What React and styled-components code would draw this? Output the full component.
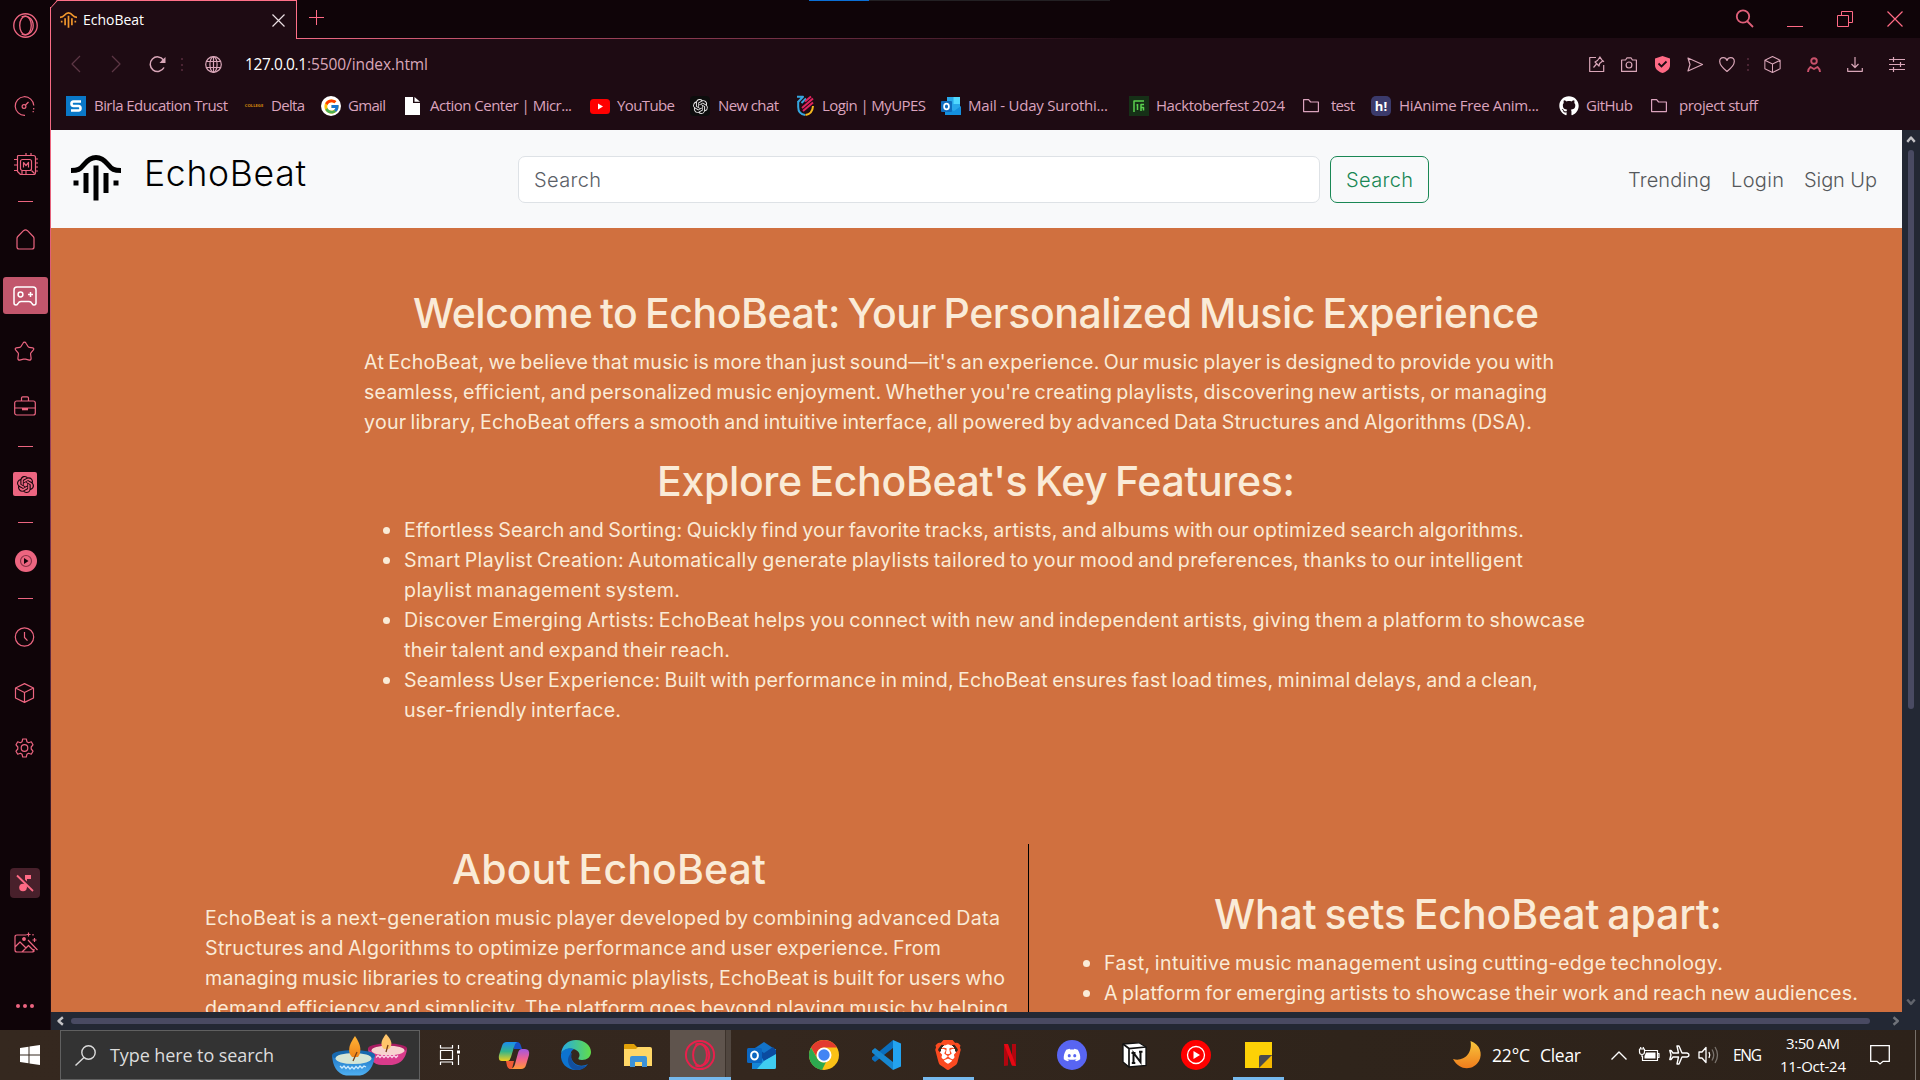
import React, { useLayoutEffect, useRef, useState } from "react";
import styled, { createGlobalStyle } from "styled-components";
import { FcGoogle } from "react-icons/fc";
import { SiOpenai, SiBrave } from "react-icons/si";
import { FaGithub, FaDiscord } from "react-icons/fa";

const PINK = "#ec6580";
const HOT = "#ff6a85";
const ICON = "#d9a6b8";
const UI_FONT = '"Open Sans", "Noto Sans", sans-serif';
const PAGE_FONT = 'Inter, "Liberation Sans", sans-serif';

const GlobalStyle = createGlobalStyle`
  * { box-sizing: border-box; }
  html, body { margin: 0; padding: 0; overflow: hidden; background: #0f0408; }
  svg { display: block; flex: none; overflow: visible; }
`;

/* ---------- text fitted to a measured width ---------- */
const FitBox = styled.span`
  display: block;
  flex: none;
  white-space: pre;
  width: ${(p) => p.$w}px;
`;
const FitInner = styled.span`
  display: inline-block;
  white-space: pre;
`;
function Fit({ w, children }) {
  const ref = useRef(null);
  const [ls, setLs] = useState(0);
  useLayoutEffect(() => {
    const natural = ref.current.getBoundingClientRect().width;
    const n = ref.current.textContent.length;
    setLs((w - natural) / Math.max(1, n - 1));
  }, [w]);
  return (
    <FitBox $w={w}>
      <FitInner ref={ref} style={{ letterSpacing: `${ls}px` }}>{children}</FitInner>
    </FitBox>
  );
}

/* ---------- shell ---------- */
const Desktop = styled.div`
  width: 1920px;
  height: 1080px;
  overflow: hidden;
  display: flex;
  flex-direction: column;
  font-family: ${UI_FONT};
`;
const Browser = styled.div`
  display: flex;
  height: 1030px;
  flex: none;
`;
const Sidebar = styled.nav`
  width: 50px;
  flex: none;
  background: #0f0408;
  display: flex;
  flex-direction: column;
  align-items: center;
  padding-top: 13px;
`;
const Slot = styled.div`
  margin-top: ${(p) => p.$gap}px;
  transform: translateX(${(p) => p.$dx || 0}px);
  width: ${(p) => p.$w || 24}px;
  height: ${(p) => p.$h}px;
  background: ${(p) => p.$bg || "transparent"};
  border-radius: ${(p) => p.$r || 0}px;
  display: flex;
  align-items: center;
  justify-content: center;
  flex: none;
  color: ${PINK};
`;
const Edge = styled.div`
  width: 1px;
  flex: none;
  margin-top: 7px;
  background: linear-gradient(#ff7088 0, #e0607a 240px, #7a3350 520px, #3a1a2a 800px, #1e0c14 1000px);
`;
const Main = styled.div`
  width: 1869px;
  display: flex;
  flex-direction: column;
`;

/* ---------- title bar ---------- */
const TitleBar = styled.div`
  height: 39px;
  background: #0f0408;
  display: flex;
  flex: none;
  position: relative;
`;
const Tab = styled.div`
  width: 246px;
  height: 39px;
  background: #1e0b13;
  border-top: 1px solid #ff7088;
  border-right: 1px solid #ff7088;
  display: flex;
  align-items: center;
  padding-left: 9px;
  color: #fff;
  font-size: 14px;
  position: relative;
  clip-path: polygon(6px 0, 100% 0, 100% 100%, 0 100%, 0 7px);
`;
const TabCorner = styled.svg`
  position: absolute;
  left: -1px;
  top: -1px;
`;
const TabTitle = styled.div`
  margin: -1px 0 0 6px;
  width: 189px;
`;
const BarRest = styled.div`
  flex: 1;
  display: flex;
  align-items: flex-start;
  border-bottom: 1px solid;
  border-image: linear-gradient(90deg, #f06a84 0, #b04a62 220px, #6a2c40 520px, #1e0b13 820px) 1;
  padding: 10px 0 0 12px;
`;
const WindowControls = styled.div`
  margin-left: auto;
  display: flex;
  align-items: center;
  gap: 34px;
  padding-right: 17px;
`;
const TopStrip = styled.div`
  position: absolute;
  left: 758px;
  top: 0;
  width: 301px;
  height: 1px;
  background: linear-gradient(90deg, #0a6fd6 60px, #232023 60px);
`;

/* ---------- address bar ---------- */
const AddressBar = styled.div`
  height: 50px;
  flex: none;
  background: #1e0b13;
  display: flex;
  align-items: center;
  padding-left: 20px;
  color: ${ICON};
`;
const Spacer = styled.div`
  width: ${(p) => p.$w}px;
  flex: none;
`;
const Url = styled.div`
  display: flex;
  font-size: 15.5px;
  color: ${ICON};
  b { font-weight: 400; color: #fff; }
`;
const Tools = styled.div`
  margin-left: auto;
  display: flex;
  align-items: center;
  padding-right: 13px;
`;
const Tool = styled.div`
  width: 20px;
  height: 20px;
  margin-left: ${(p) => p.$gap}px;
  color: ${(p) => p.$c || ICON};
  display: flex;
  align-items: center;
  justify-content: center;
`;
const Dots = styled.div`
  width: 2px;
  height: 13px;
  margin-left: ${(p) => p.$gap || 0}px;
  background: repeating-linear-gradient(#4a2433 0 2px, transparent 2px 5.5px);
`;

/* ---------- bookmarks ---------- */
const Bookmarks = styled.div`
  height: 41px;
  flex: none;
  background: #1e0b13;
  display: flex;
  padding: 7px 0 0 15px;
`;
const Bookmark = styled.div`
  width: ${(p) => p.$w}px;
  height: 20px;
  flex: none;
  display: flex;
  align-items: center;
  gap: ${(p) => p.$gap}px;
  font-size: 15px;
  color: #dba3bd;
`;
const BookmarkText = styled.div`
  margin-top: -2px;
`;
const Glyph = styled.div`
  width: 20px;
  height: 20px;
  flex: none;
  display: flex;
  align-items: center;
  justify-content: center;
  background: ${(p) => p.$bg || "transparent"};
  border-radius: ${(p) => p.$r || 0}px;
  color: ${(p) => p.$c || "#fff"};
  font-size: ${(p) => p.$fs || 12}px;
  font-weight: 700;
  line-height: 1;
`;

/* ---------- web page ---------- */
const Frame = styled.div`
  display: flex;
  height: 882px;
  flex: none;
`;
const Page = styled.div`
  width: 1851px;
  height: 882px;
  overflow: hidden;
  background: #d0703f;
  color: #faebd7;
  font-family: ${PAGE_FONT};
`;
const Navbar = styled.header`
  height: 98px;
  background: #f8f9fa;
  display: flex;
  align-items: center;
  padding-left: 20px;
`;
const LogoWrap = styled.div`
  margin-top: -3px;
`;
const Brand = styled.div`
  width: 374px;
  margin: -12px 0 0 23px;
  font-size: 35.5px;
  font-weight: 300;
  color: #000;
`;
const SearchField = styled.div`
  width: 802px;
  height: 47px;
  flex: none;
  border: 1px solid #dee2e6;
  border-radius: 7px;
  background: #fff;
  color: #5b6067;
  font-size: 20px;
  font-weight: 300;
  display: flex;
  align-items: center;
  padding: 2px 0 0 15px;
`;
const SearchButton = styled.button`
  width: 99px;
  height: 47px;
  margin-left: 10px;
  padding: 2px 0 0 15px;
  border: 1px solid #198754;
  border-radius: 7px;
  background: transparent;
  color: #198754;
  font: 300 20px ${PAGE_FONT};
  text-align: left;
`;
const NavLinks = styled.div`
  display: flex;
  gap: 20px;
  margin-left: auto;
  padding: 2px 25px 0 0;
  font-size: 20px;
  font-weight: 300;
  color: #55585b;
`;
const Hero = styled.section`
  height: 616px;
  padding: 61px 0 0 313px;
`;
const Heading = styled.h1`
  margin: 0 0 10px ${(p) => p.$x}px;
  height: 48px;
  line-height: 48px;
  font-size: 41px;
  font-weight: 500;
  word-spacing: -3px;
`;
const Lines = styled.div`
  font-size: 19.6px;
  line-height: 30px;
  margin-bottom: 20px;
  word-spacing: -1.6px;
`;
const List = styled.ul`
  margin: 0;
  padding: 0;
  list-style: none;
  font-size: 19.6px;
  line-height: 30px;
  word-spacing: -1.6px;
`;
const Item = styled.li`
  display: grid;
  grid-template-columns: 40px auto;
  &::before {
    content: "";
    width: 7px;
    height: 7px;
    border-radius: 50%;
    background: #faebd7;
    margin: 12px 0 0 19px;
  }
`;
const Columns = styled.section`
  display: flex;
`;
const About = styled.div`
  width: 978px;
  height: 400px;
  padding: 1px 0 0 154px;
  border-right: 1px solid #000;
`;
const Apart = styled.div`
  padding: 46px 0 0 35px;
`;

/* ---------- scrollbars ---------- */
const VScroll = styled.div`
  width: 18px;
  height: 882px;
  background: #232834;
  display: flex;
  flex-direction: column;
  align-items: center;
  padding: 5px 0;
`;
const VThumb = styled.div`
  width: 6px;
  height: 559px;
  margin: 5px 0 auto;
  border-radius: 3px;
  background: #494a62;
`;
const HScroll = styled.div`
  height: 18px;
  flex: none;
  background: #232834;
  display: flex;
  align-items: center;
  padding-left: 5px;
`;
const HThumb = styled.div`
  width: 1799px;
  height: 6px;
  margin: 0 21px 0 5px;
  border-radius: 3px;
  background: #494a62;
`;

/* ---------- taskbar ---------- */
const Taskbar = styled.footer`
  height: 50px;
  flex: none;
  display: flex;
  align-items: center;
  background: linear-gradient(90deg, #35281f, #34271e 40%, #2f241b 70%, #2d221a);
  color: #fff;
`;
const Start = styled.div`
  width: 60px;
  padding-left: 20px;
`;
const TaskSearch = styled.div`
  width: 360px;
  height: 50px;
  border: 1px solid #606060;
  background: #333;
  display: flex;
  align-items: center;
  padding-left: 14px;
  color: #dcdcdc;
  font-size: 18px;
`;
const TaskView = styled.div`
  width: 63px;
  padding-left: 20px;
`;
const TaskApp = styled.div`
  width: 62px;
  height: 50px;
  display: flex;
  align-items: center;
  justify-content: center;
  ${(p) =>
    p.$active &&
    `background: linear-gradient(90deg,transparent 1px,#5f544d 1px 56px,#3d332c 56px 57px,#50463f 57px);
     box-shadow: inset 0 -3px #76b9ed;`}
  ${(p) =>
    p.$open &&
    `background: linear-gradient(#76b9ed,#76b9ed) 6px 47px / 51px 3px no-repeat;`}
`;
const BraveBadge = styled.div`
  color: #fb4a20;
  width: 30px;
  height: 30px;
  display: flex;
  align-items: center;
  justify-content: center;
  background: radial-gradient(ellipse 8px 11px, #fff 98%, transparent);
`;
const Tray = styled.div`
  margin-left: auto;
  display: flex;
  align-items: center;
  width: 467px;
  height: 50px;
  font-size: 17.5px;
`;
const Lang = styled.div`
  font-size: 15.5px;
  margin: -1px 0 0 14px;
`;
const Clock = styled.div`
  margin: -1px 0 0 18px;
  width: 66px;
  font-size: 15px;
  line-height: 23px;
  display: flex;
  flex-direction: column;
  align-items: center;
`;
const ShowDesktop = styled.div`
  width: 1px;
  height: 50px;
  margin-left: 25px;
  background: #77706a;
`;

/* ---------- drawings ---------- */
const S = ({ w = 20, h = w, vb, sw = 1.2, children, ...r }) => (
  <svg width={w} height={h} viewBox={vb || `0 0 ${w} ${h}`} fill="none" stroke="currentColor" strokeWidth={sw} strokeLinejoin="round" {...r}>
    {children}
  </svg>
);
const Wave = ({ w, h, color }) => (
  <S w={w} h={h} vb="0 0 50 46" stroke={color} sw={5} preserveAspectRatio="none">
    <path d="M0 15.500c7 0 9-1 13-6C17 4.500 20 2.500 25 2.500s8 2 12 7c4 5 6 6 13 6" />
    <path d="M25 10.500v35M15 18v20M35 18v20M2.500 28h5M42.500 28h5" />
  </S>
);
const OperaRing = ({ w, h, color, sw }) => (
  <S w={w} h={h} vb="0 0 26 26" stroke={color} sw={sw}>
    <circle cx="13" cy="13" r="12.200" />
    <ellipse cx="13" cy="13" rx="6" ry="9.600" />
    <path d="M9 4C15 1.500 21 6 21 13s-6 11.500-12 9" />
  </S>
);
const Cube = ({ s }) => (
  <S w={s} vb="0 0 20 20"><path d="M10 .6 19 5v10l-9 4.400L1 15V5zM1 5l9 4.500L19 5M10 9.500v10" /></S>
);
const Folder = () => <S w={16} h={14} stroke="#dba3bd"><path d="M.6 12.600V.6h5l2 2.400h7.800v9.600z" /></S>;
const Chev = ({ d, c }) => <S w={10} h={10} vb="0 0 8 8" sw={1.9} stroke={c}><path d={d} /></S>;

const bookmarks = [
  { w: 178, gap: 8, t: "Birla Education Trust", tw: 134, i: <Glyph $bg="#0a78c8"><S w={12} h={12} sw={2.6} stroke="#fff"><path d="M11 1.500H3.500Q1.500 1.500 1.500 3.700T3.500 6h5q2 0 2 2.300t-2 2.200H1" /></S></Glyph> },
  { w: 77, gap: 7, t: "Delta", tw: 34, i: <Glyph $c="#d58a0c" $fs={4.2}>COLLEGE</Glyph> },
  { w: 81, gap: 7, t: "Gmail", tw: 38, i: <Glyph $bg="#fff" $r={10}><FcGoogle size={17} /></Glyph> },
  { w: 188, gap: 8, t: "Action Center | Micr...", tw: 142, i: <Glyph><svg width="15" height="18"><path d="M0 0h8v6h7v12H0z" fill="#fff" /><path d="M9.500 0v4.800H15z" fill="#fff" /></svg></Glyph> },
  { w: 100, gap: 7, t: "YouTube", tw: 58, i: <Glyph><svg width="20" height="15"><rect width="20" height="15" rx="3.500" fill="#f00" /><path d="M8 4.500v6l5-3z" fill="#fff" /></svg></Glyph> },
  { w: 105, gap: 8, t: "New chat", tw: 61, i: <Glyph $bg="#0d0d0d" $r={4} $c="#e8e8e8"><SiOpenai size={15} /></Glyph> },
  { w: 146, gap: 7, t: "Login | MyUPES", tw: 104, i: <Glyph><S w={17} h={20} sw={2}><path d="M1.200 5v6q0 7 7 8" stroke="#35a7e0" /><path d="M0 .800h6L1 6M4.500 7 9 2.500" stroke="#35a7e0" /><path d="M8 5.500 14 .5M5 12 16 2.500M6 15 16 6.500" stroke="#e0245e" /><path d="M8.500 19q7-1 7.500-9" stroke="#f5b81f" /></S></Glyph> },
  { w: 188, gap: 7, t: "Mail - Uday Surothi...", tw: 140, i: <Glyph><svg width="20" height="20"><path d="M6 1h13v17H6z" fill="#28a8ea" /><path d="M12.500 1H19v7h-6.500z" fill="#50d9ff" /><path d="M4 11l9 4 7-5v9H4z" fill="#1490df" /><rect y="5" width="11" height="11" rx="1" fill="#0f6cbd" /><ellipse cx="5.500" cy="10.500" rx="2.400" ry="2.900" fill="none" stroke="#fff" strokeWidth="1.700" /></svg></Glyph> },
  { w: 172, gap: 7, t: "Hacktoberfest 2024", tw: 129, i: <Glyph $bg="#163017"><S w={12} h={12} stroke="#5bd14f" sw={1.5}><path d="M1 12V1h10M4.500 4v6M3.500 5h1M8 11V4.500h3M8 7.500h2.500v3" /></S></Glyph> },
  { w: 70, gap: 10, t: "test", tw: 24, i: <Glyph><Folder /></Glyph> },
  { w: 188, gap: 8, t: "HiAnime Free Anim...", tw: 140, i: <Glyph $bg="#3b3a6b" $r={5} $fs={13}>h!</Glyph> },
  { w: 90, gap: 7, t: "GitHub", tw: 47, i: <Glyph><FaGithub size={20} /></Glyph> },
  { w: 120, gap: 10, t: "project stuff", tw: 79, i: <Glyph><Folder /></Glyph> },
];

const Side = () => (
  <Sidebar>
    <Slot $h={25} $gap={0} $w={26}><OperaRing w={25} h={25} color={PINK} sw={1.4} /></Slot>
    <Slot $h={20} $gap={58} $dx={-0.5}>
      <S w={20}><path d="M10.500 19.300A9.300 9.300 0 1 1 19.300 9.500" /><path d="M19.200 12v1.500M18.700 15v1.200" /><circle cx="9.500" cy="10.500" r="1.900" /><path d="M11 9 14 6" /></S>
    </Slot>
    <Slot $h={24} $gap={37} $dx={1}>
      <S w={24}><path d="M3.500 3.500q0-1 1-1h15q2 0 2 2v15q0 2-2 2h-13l-3-3z" /><rect x="6.500" y="6.500" width="11" height="11" rx="2" /><path d="M9.500 14.500v-5l2.500 3 2.500-3v5M12 0v2.500M17 0v2.500M0 6.500h3.500M0 12h3.500M0 17.500h3.500M21.500 6h2.500M21.500 10h2.500M21.500 14h2.500M21.500 18h2.500M8 17.500v4M12 17.500v4M17.500 17.500l3 3" /></S>
    </Slot>
    <Slot $h={1} $w={15} $gap={24} $bg={PINK} />
    <Slot $h={22} $gap={26}><S w={19} h={21}><path d="M1 9.500q0-1.200.8-2L7.500 1.700q2-1.500 4 0l5.700 5.800q.8.800.8 2V18q0 2-2 2H3q-2 0-2-2z" /></S></Slot>
    <Slot $h={37} $w={45} $gap={27} $bg="#c2566c" $r={3}>
      <S w={24} h={20} stroke="#fff" sw={1.5}><path d="M1 4q0-3 3-3h16q3 0 3 3v13q0 2-2 2-1 0-2-1.500-1-2-3-2H8q-2 0-3 2Q4 19 3 19q-2 0-2-2z" /><circle cx="7.500" cy="8.500" r="2.400" /><path d="M15 8.500h5M17.500 6v5" /></S>
    </Slot>
    <Slot $h={21} $gap={27} $dx={-1}><S w={21}><path d="M10.500 1.200q1 0 1.500 1l2 3.300q.4.700 1.200.8l3.500.6q1.800.5.700 2l-2.500 3q-.4.500-.3 1.300l.5 4q0 2-1.800 2l-3.800-1q-1-.2-2 0l-3.800 1q-1.800 0-1.800-2l.5-4q.1-.8-.3-1.300l-2.500-3q-1.100-1.500.7-2l3.500-.6q.8-.1 1.200-.8l2-3.300q.5-1 1.500-1z" /></S></Slot>
    <Slot $h={20} $gap={34}><S w={22} h={20}><rect x=".7" y="5" width="20.600" height="14" rx="2" /><path d="M7.500 5V2q0-1.200 1.200-1.200h4.600q1.200 0 1.200 1.200v3M.7 12h20.600" /><path d="M8 12h6v2.300H8z" fill="currentColor" stroke="none" /></S></Slot>
    <Slot $h={1} $w={15} $gap={30} $bg={PINK} />
    <Slot $h={24} $gap={25} $bg={PINK} $r={2}><SiOpenai size={17} color="#14050a" /></Slot>
    <Slot $h={1} $w={15} $gap={26} $bg={PINK} />
    <Slot $h={22} $gap={27} $w={22} $r={11} $bg={PINK} $dx={1}><S w={14} stroke="#8a3347"><circle cx="7" cy="7" r="5.500" /><path d="M5 4v6l4.500-3z" fill="#14050a" stroke="none" /></S></Slot>
    <Slot $h={1} $w={15} $gap={26} $bg={PINK} />
    <Slot $h={20} $gap={28} $dx={-0.5}><S w={20}><circle cx="10" cy="10" r="9.200" /><path d="M10 5v5.500l3 3.200" /></S></Slot>
    <Slot $h={20} $gap={36} $dx={-0.5}><Cube s={20} /></Slot>
    <Slot $h={20} $gap={35} $dx={-0.5}>
      <S w={20}><circle cx="10" cy="10" r="3.300" /><path d="M8.200 1h3.600l.6 2.700 1.700 1 2.700-.9 1.700 3L16.700 9v2l1.800 2.200-1.700 3-2.700-.9-1.700 1-.6 2.700H8.200l-.6-2.700-1.700-1-2.700.9-1.700-3L3.300 11V9L1.500 6.800l1.700-3 2.700.9 1.700-1z" /></S>
    </Slot>
    <Slot $h={30} $w={30} $gap={110} $bg="#48202b" $r={4}>
      <S w={18} stroke={HOT} sw={1.8}><path d="M1 1.500 17 17" /><circle cx="7" cy="13.500" r="3.800" fill={HOT} stroke="none" /><path d="M9 1h6v4h-4v2.500L9 5.500z" fill={HOT} stroke="none" /><path d="M9.800 10.500V14" /></S>
    </Slot>
    <Slot $h={22} $gap={34} $dx={1}>
      <S w={24} h={22}><path d="M12.500 3H3Q1 3 1 5v13q0 2 2 2h15q2 0 2-2v-1M1 15l5-5 6 6 2.500-2.500 6 6M8 20l4-4" /><circle cx="10" cy="7" r="1.300" fill="currentColor" /><path d="M14 8l9.500 10M14.500.5v4M12.500 2.500h4M20.500 6v4M18.500 8h4M19 2v1.500" /></S>
    </Slot>
    <Slot $h={5} $gap={49}><svg width="18" height="4" fill={PINK}><circle cx="2" cy="2" r="2" /><circle cx="9" cy="2" r="2" /><circle cx="16" cy="2" r="2" /></svg></Slot>
  </Sidebar>
);

const Diyas = () => (
  <svg width="76" height="42" viewBox="0 0 76 42">
    <defs>
      <linearGradient id="fl" x1="0" y1="0" x2="0" y2="1"><stop offset="0" stopColor="#ffb437" /><stop offset="1" stopColor="#f08418" /></linearGradient>
      <linearGradient id="bb" x1="0" y1="0" x2="0" y2="1"><stop offset="0" stopColor="#1c74c4" /><stop offset="1" stopColor="#4fb0f2" /></linearGradient>
    </defs>
    <path d="M36 14q1 17 14 17h10q14-2 15-17z" fill="#d93b8b" />
    <ellipse cx="55.500" cy="14.500" rx="19.500" ry="5" fill="#a81c62" />
    <ellipse cx="56" cy="16.500" rx="16.500" ry="4.800" fill="#f7d3cf" />
    <path d="M44 23.500l2-2 2 2 2-2 2 2 2-2 2 2 2-2 2 2 2-2 2 2 2-2" stroke="#fbd1e6" fill="none" strokeWidth="1.300" />
    <path d="M54 0q9 9 3 15h-5q-6-5 2-15z" fill="#ffc56b" />
    <path d="M0 21q1 18 14 20.500h14Q41 39 43 21z" fill="url(#bb)" />
    <ellipse cx="21.500" cy="21.500" rx="21.500" ry="5.500" fill="#1768ae" />
    <ellipse cx="21.500" cy="24.500" rx="18" ry="5.500" fill="#d5e5d5" />
    <path d="M8 32l2 2 2-2 2 2.500 2-2 2 2.500 2-2 2 2 2-2.500 2 2 2-2.500 2 2 2-2 2 1" stroke="#cbeaff" fill="none" strokeWidth="1.300" />
    <path d="M23 2q9 13 3 21h-6q-7-7 3-21z" fill="url(#fl)" />
    <path d="M25 18l-4 9M56 11l-2 7" stroke="#7a4018" strokeWidth="1.300" />
  </svg>
);

const apps = [
  { i: <svg width="30" height="27" viewBox="0 0 30 27"><defs><linearGradient id="c1" x1="0" y1="0" x2="0" y2="1"><stop offset="0" stopColor="#1a8df0" /><stop offset=".5" stopColor="#35b48a" /><stop offset="1" stopColor="#f4cf1c" /></linearGradient><linearGradient id="c2" x1="0" y1="0" x2="0" y2="1"><stop offset="0" stopColor="#a257e0" /><stop offset=".5" stopColor="#f0628f" /><stop offset="1" stopColor="#ff9838" /></linearGradient></defs><path d="M15 0h3q3 0 4 4l1 3h-8z" fill="#1750c8" /><path d="M13 27H11q-2 0-3-3l-1-5h8z" fill="#ef5a35" /><path d="M8 0h10q-2 1-3 5l-3 10q-1 4-4 4H3q-4 0-3-6L3 4q1-4 5-4z" fill="url(#c1)" /><path d="M22 27H12q3-1 4-5l3-11q1-4 4-4h3q5 0 4 6l-3 10q-1 4-5 4z" fill="url(#c2)" /></svg> },
  { i: <svg width="30" height="30" viewBox="0 0 30 30"><defs><linearGradient id="e1"><stop offset="0" stopColor="#24a9e8" /><stop offset="1" stopColor="#62dd48" /></linearGradient></defs><path d="M0 14C1 5 7 0 15 0c9 0 15 6 15 12 0 5-4 8-9 8-3 0-4-1-3.500-2C20 15 18 10 12 9 6 8 1 11 0 14z" fill="url(#e1)" /><path d="M0 14C2 9 8 7 13 9c-4 2-4 7-2 11 3 6 10 7 16 4-3 4-7 6-12 6C6 30-1 23 0 14z" fill="#0d73cf" /><path d="M11 13c-3 8 4 15 12 13 2 0 4-1 4-2-3 5-8 6-12 6-8-1-11-13-4-17z" fill="#124f9e" /></svg> },
  { i: <svg width="28" height="23" viewBox="0 0 28 23"><path d="M0 1q0-1 1-1h9l3 3h13v5H0z" fill="#e0a008" /><path d="M0 5h12l2-2h12q2 0 2 2v17H0z" fill="#ffd767" /><path d="M6 23v-9q0-2 2-2h13q2 0 2 2v9h-5v-5h-7v5z" fill="#3c92d8" /></svg> },
  { active: true, i: <OperaRing w={30} h={30} color="#e8204c" sw={1.7} /> },
  { i: <svg width="30" height="27" viewBox="0 0 30 27"><path d="M5 8 17 0l12 8v9H5z" fill="#1373c8" /><path d="M15 12l14-5v18q0 2-2 2H7z" fill="#35c5ee" /><path d="M5 8 29 24q0 3-3 3H5z" fill="#1486d8" /><path d="M8 5l9 6 9-6 3 3v5l-12 6z" fill="#0b4ba0" /><path d="M17 19 29 12v13q0 2-2 2H10z" fill="#3fcdf2" /><rect y="6" width="15" height="15" rx="1.500" fill="#0c66c0" /><ellipse cx="7.500" cy="13.500" rx="3.400" ry="4" fill="none" stroke="#fff" strokeWidth="2" /></svg> },
  { i: <svg width="30" height="30" viewBox="0 0 30 30"><circle cx="15" cy="15" r="15" fill="#fbc116" /><path d="M2 7.500A15 15 0 0 1 28 7.500H15a7.500 7.500 0 0 0-7 10z" fill="#e33b2e" /><path d="M2 7.500 8.500 19A7.500 7.500 0 0 0 17 22l-4 8A15 15 0 0 1 2 7.500z" fill="#2da94f" /><circle cx="15" cy="15" r="7.500" fill="#fff" /><circle cx="15" cy="15" r="5.700" fill="#4285f4" /></svg> },
  { i: <svg width="30" height="30" viewBox="0 0 30 30"><path d="M22 0l8 3.500v23L22 30z" fill="#23a3ef" /><path d="M22 0v8L4 22l-3-2.500v-2z" fill="#0a6ebd" /><path d="M22 30v-8L4 8 1 10.500v2z" fill="#1787d0" /></svg> },
  { open: true, i: <BraveBadge><SiBrave size={30} /></BraveBadge> },
  { i: <svg width="12" height="22" viewBox="0 0 12 22"><path d="M0 0h4v21.500L0 22zM8 0h4v22l-4-.5z" fill="#b1060f" /><path d="M0 0h4l8 22-4.200-.5z" fill="#e50914" /></svg> },
  { i: <svg width="30" height="30" viewBox="0 0 30 30"><circle cx="15" cy="15" r="15" fill="#5865f2" /><g transform="translate(6 6)"><FaDiscord size={18} color="#fff" /></g></svg> },
  { i: <svg width="25" height="26" viewBox="0 0 25 26"><path d="M1 2 17 .800 24 5v18.500L7 25 1 20z" fill="#fff" stroke="#111" strokeWidth="1.300" /><path d="M1 2l6 4.500L24 5M7 6.500V25" stroke="#111" strokeWidth="1.700" fill="none" /><path d="M11.500 21V11l7 9V9.500M9.500 11h4M17 9.700h3.500M9.800 21h3.500" stroke="#111" strokeWidth="2" fill="none" /></svg> },
  { i: <svg width="30" height="30" viewBox="0 0 30 30"><circle cx="15" cy="15" r="15" fill="#f00" /><circle cx="15" cy="15" r="8.500" fill="none" stroke="#fff" strokeWidth="1.300" /><path d="M12.500 11v8l6.500-4z" fill="#fff" /></svg> },
  { open: true, i: <svg width="27" height="26" viewBox="0 0 27 26"><path d="M0 0h27v13L14 26H0z" fill="#fdd106" /><path d="M14 26V14h13v12z" fill="#f5b800" /><path d="M27 13 14 26V15q0-2 2-2z" fill="#4a4a4c" /></svg> },
];

export default function App() {
  return (
    <Desktop>
      <GlobalStyle />
      <Browser>
        <Side />
        <Edge />
        <Main>
          <TitleBar>
            <Tab>
              <TabCorner width="8" height="9"><path d="M0 8 7 .5" stroke="#ff7088" strokeWidth="1.400" /></TabCorner>
              <Wave w={17} h={16} color="#f0962c" />
              <TabTitle><Fit w={61}>EchoBeat</Fit></TabTitle>
              <S w={13} stroke="#eadfe3"><path d="M.5.5l12 12M12.500.5l-12 12" /></S>
            </Tab>
            <BarRest>
              <S w={15} stroke={HOT} sw={1}><path d="M7.500 0v15M0 7.500h15" /></S>
              <WindowControls>
                <S w={17} h={18} stroke="#e0607a" sw={1.8}><circle cx="7" cy="6.500" r="6.200" /><path d="M11 11l6 6" /></S>
                <S w={16} h={16} stroke={HOT} sw={1}><path d="M0 15.500h16" /></S>
                <S w={16} h={16} stroke={HOT} sw={1}><path d="M.5 4.500h11v11H.5zM4.500 4.500v-4h11v11h-4" /></S>
                <S w={16} h={16} stroke={HOT} sw={1.2}><path d="M.5.5l15 15M15.500.5l-15 15" /></S>
              </WindowControls>
            </BarRest>
            <TopStrip />
          </TitleBar>
          <AddressBar>
            <S w={10} h={16} stroke="#5c3644"><path d="M9 0 1 8l8 8" /></S>
            <Spacer $w={30} />
            <S w={10} h={16} stroke="#5c3644"><path d="M1 0l8 8-8 8" /></S>
            <Spacer $w={28} />
            <S w={17} sw={1.5}><path d="M15 11.500A7.300 7.300 0 1 1 14.500 4" /><path d="M16.500 1v6h-6l2.500-2.800z" fill="currentColor" stroke="none" /></S>
            <Dots $gap={15} />
            <Spacer $w={22} />
            <S w={17}><circle cx="8.500" cy="8.500" r="7.800" /><ellipse cx="8.500" cy="8.500" rx="3.600" ry="7.800" /><path d="M1.500 5.500h14M1.500 11.500h14M8.500.7v15.600" /></S>
            <Spacer $w={23} />
            <Url><b><Fit w={62}>127.0.0.1</Fit></b><Fit w={121}>:5500/index.html</Fit></Url>
            <Tools>
              <Tool $gap={0}><S w={16} h={16}><path d="M7 1.500H.7v14h14V9M4.500 11.500 7.500 8M6 6l4 4 .6-2.500 3-2.500L11 1 8.500 4.500zM10 .8l5 5" /></S></Tool>
              <Tool $gap={12}><S w={16} h={15}><path d="M.6 3h4L6 .8h4L11.400 3h4v11.400H.6z" /><ellipse cx="8" cy="8" rx="2.900" ry="3" /></S></Tool>
              <Tool $gap={13} $c={HOT}><svg width="15" height="17"><path d="M7.500 0 15 2.500V9c0 4-3 6.500-7.500 8C3 15.500 0 13 0 9V2.500z" fill={HOT} /><path d="M3.500 7.500l3 3 5-5" stroke="#1e0b13" strokeWidth="1.800" fill="none" /></svg></Tool>
              <Tool $gap={13}><S w={16} h={15}><path d="M1 1l14.500 6.500L1 14l2-6.500z" /></S></Tool>
              <Tool $gap={12}><S w={16} h={15}><path d="M8 14.500C3.500 11 .7 8 .7 4.600.7 2.200 2.300.7 4.300.7 6 .7 7.500 2 8 3.500 8.500 2 10 .7 11.700.7c2 0 3.600 1.500 3.600 3.900C15.300 8 12.500 11 8 14.500z" /></S></Tool>
              <Dots $gap={10} />
              <Tool $gap={13}><Cube s={17} /></Tool>
              <Tool $gap={22} $c="#c9516b"><S w={16} h={15} sw={1.9}><circle cx="8" cy="4" r="2.800" /><path d="M2 15q0-3 2.500-5l3.500 2 3.500-2Q14 12 14 15" /></S></Tool>
              <Tool $gap={21}><S w={16} h={15}><path d="M8 0v10.500M4.500 7 8 10.500 11.500 7M.7 11v3.300h14.600V11" /></S></Tool>
              <Tool $gap={22}><S w={16} h={15}><path d="M0 2.500h16M0 7.500h16M0 12.500h16M4.500 0v5M11.500 5v5M4.500 10v5" /></S></Tool>
            </Tools>
          </AddressBar>
          <Bookmarks>
            {bookmarks.map((b) => (
              <Bookmark key={b.t} $w={b.w} $gap={b.gap}>{b.i}<BookmarkText><Fit w={b.tw}>{b.t}</Fit></BookmarkText></Bookmark>
            ))}
          </Bookmarks>
          <Frame>
            <Page>
              <Navbar>
                <LogoWrap><Wave w={50} h={46} color="#000" /></LogoWrap>
                <Brand><Fit w={162}>EchoBeat</Fit></Brand>
                <SearchField><Fit w={67}>Search</Fit></SearchField>
                <SearchButton><Fit w={67}>Search</Fit></SearchButton>
                <NavLinks><Fit w={83}>Trending</Fit><Fit w={53}>Login</Fit><Fit w={73}>Sign Up</Fit></NavLinks>
              </Navbar>
              <Hero>
                <Heading $x={49}><Fit w={1126}>Welcome to EchoBeat: Your Personalized Music Experience</Fit></Heading>
                <Lines>
                  <Fit w={1190}>At EchoBeat, we believe that music is more than just sound—it's an experience. Our music player is designed to provide you with</Fit>
                  <Fit w={1183}>seamless, efficient, and personalized music enjoyment. Whether you're creating playlists, discovering new artists, or managing</Fit>
                  <Fit w={1168}>your library, EchoBeat offers a smooth and intuitive interface, all powered by advanced Data Structures and Algorithms (DSA).</Fit>
                </Lines>
                <Heading $x={293}><Fit w={638}>Explore EchoBeat's Key Features:</Fit></Heading>
                <List>
                  <Item><div><Fit w={1120}>Effortless Search and Sorting: Quickly find your favorite tracks, artists, and albums with our optimized search algorithms.</Fit></div></Item>
                  <Item><div><Fit w={1119}>Smart Playlist Creation: Automatically generate playlists tailored to your mood and preferences, thanks to our intelligent</Fit><Fit w={276}>playlist management system.</Fit></div></Item>
                  <Item><div><Fit w={1181}>Discover Emerging Artists: EchoBeat helps you connect with new and independent artists, giving them a platform to showcase</Fit><Fit w={326}>their talent and expand their reach.</Fit></div></Item>
                  <Item><div><Fit w={1134}>Seamless User Experience: Built with performance in mind, EchoBeat ensures fast load times, minimal delays, and a clean,</Fit><Fit w={217}>user-friendly interface.</Fit></div></Item>
                </List>
              </Hero>
              <Columns>
                <About>
                  <Heading $x={247}><Fit w={314}>About EchoBeat</Fit></Heading>
                  <Lines>
                    <Fit w={795}>EchoBeat is a next-generation music player developed by combining advanced Data</Fit>
                    <Fit w={736}>Structures and Algorithms to optimize performance and user experience. From</Fit>
                    <Fit w={800}>managing music libraries to creating dynamic playlists, EchoBeat is built for users who</Fit>
                    <Fit w={803}>demand efficiency and simplicity. The platform goes beyond playing music by helping</Fit>
                  </Lines>
                </About>
                <Apart>
                  <Heading $x={150}><Fit w={508}>What sets EchoBeat apart:</Fit></Heading>
                  <List>
                    <Item><div><Fit w={619}>Fast, intuitive music management using cutting-edge technology.</Fit></div></Item>
                    <Item><div><Fit w={754}>A platform for emerging artists to showcase their work and reach new audiences.</Fit></div></Item>
                  </List>
                </Apart>
              </Columns>
            </Page>
            <VScroll>
              <Chev d="M1 5.500 4 2l3 3.500" c="#c3c3c6" />
              <VThumb />
              <Chev d="M1 2l3 3.500L7 2" c="#61646c" />
            </VScroll>
          </Frame>
          <HScroll>
            <Chev d="M5.500 1 2 4l3.500 3" c="#c3c3c6" />
            <HThumb />
            <Chev d="M2 1l3.500 3L2 7" c="#70737a" />
          </HScroll>
        </Main>
      </Browser>
      <Taskbar>
        <Start><svg width="20" height="20" fill="#fff"><path d="M0 3 8.500 1.700v7.800H0zM9.500 1.500 20 0v9.500H9.500zM0 10.500h8.500v7.800L0 17zM9.500 10.500H20V20L9.500 18.500z" /></svg></Start>
        <TaskSearch>
          <S w={21} h={21} sw={1.4}><circle cx="13.500" cy="7.500" r="6.700" /><path d="M9 12.500.5 20.500" /></S>
          <Spacer $w={14} />
          <Fit w={164}>Type here to search</Fit>
          <Spacer $w={58} />
          <Diyas />
        </TaskSearch>
        <TaskView><S w={20} h={20} sw={1.2}><path d="M.5 5.500h12v9H.5zM.5 0v3h12V0M.5 20v-3h12v3M18.500 0v4M18.500 10v10" /><path d="M17 5.500h3v3h-3z" fill="#fff" stroke="none" /></S></TaskView>
        {apps.map((a, n) => (
          <TaskApp key={n} $active={a.active} $open={a.open}>{a.i}</TaskApp>
        ))}
        <Tray>
          <svg width="28" height="28" viewBox="0 0 28 28"><defs><linearGradient id="mn" x1="0" y1="0" x2="0" y2="1"><stop offset="0" stopColor="#f7c63c" /><stop offset="1" stopColor="#f07c1c" /></linearGradient></defs><path d="M17.500 0C27 3 30 13 26 20 21 29 7 31 0 18c10 3 20-5 17.500-18z" fill="url(#mn)" /></svg>
          <Spacer $w={11} />
          <Fit w={38}>22°C</Fit>
          <Spacer $w={10} />
          <Fit w={41}>Clear</Fit>
          <Spacer $w={30} />
          <S w={16} h={9} sw={1.4}><path d="M.5 8.500 8 1l7.500 7.500" /></S>
          <Spacer $w={12} />
          <S w={21} h={14} sw={1.2}><path d="M6 2.500h12.500v10H3.500V8M18.500 5.500h1.500v4h-1.500M.5 1h5v3q0 2.500-2.500 2.500T.5 4zM1.700-1v2M4.300-1v2M3 6.500V9" /><path d="M7 4.500h9.500v6H5.500V8z" fill="#fff" stroke="none" /></S>
          <Spacer $w={9} />
          <S w={20} h={20} sw={1.4}><path d="M8 1h2l3 7h5q2 .5 2 2t-2 2h-5l-3 7H8l1.500-7H4l-2 2.500H.8L2 10 .8 5.500H2L4 8h5.500z" /></S>
          <Spacer $w={9} />
          <S w={21} h={18} sw={1.3}><path d="M1 6h3l4-4.500v15L4 12H1z" /><path d="M11 6q1.500 3 0 6" /><path d="M14 3.500q3.500 5.500 0 11M17 1q5 8 0 16" stroke="#7b746e" /></S>
          <Lang><Fit w={29}>ENG</Fit></Lang>
          <Clock><Fit w={54}>3:50 AM</Fit><Fit w={66}>11-Oct-24</Fit></Clock>
          <Spacer $w={24} />
          <S w={20} h={20} sw={1.3}><path d="M.7.7h18.600v15.600H13L10 19l-3-2.700H.7z" strokeLinejoin="miter" /></S>
          <ShowDesktop />
        </Tray>
      </Taskbar>
    </Desktop>
  );
}
